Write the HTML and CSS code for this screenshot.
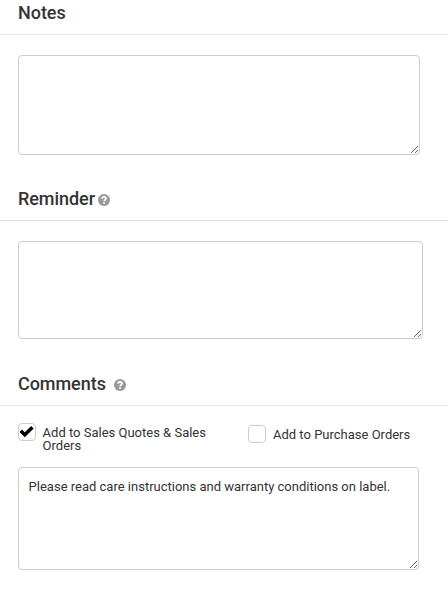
FILE: index.html
```html
<!DOCTYPE html>
<html lang="en">
<head>
    <meta charset="UTF-8">
    <meta name="viewport" content="width=device-width, initial-scale=1.0">
    <title>Notes</title>
    <link rel="stylesheet" href="styles.css">
</head>
<body>

<section class="panel">
    <h2 class="panel-title notes-title">Notes</h2>
    <textarea class="field notes-field" aria-label="Notes"></textarea>
</section>

<section class="panel">
    <h2 class="panel-title reminder-title">Reminder
        <svg class="help" viewBox="0 0 12 12"><circle cx="6" cy="6" r="6"/><path d="M4 4.6C4.1 3.4 4.9 2.8 6 2.8c1.2 0 2 .7 2 1.7 0 1.4-1.9 1.4-1.9 2.7M6.1 8.2v1.6"/></svg>
    </h2>
    <textarea class="field reminder-field" aria-label="Reminder"></textarea>
</section>

<section class="panel">
    <h2 class="panel-title comments-title">Comments
        <svg class="help" viewBox="0 0 12 12"><circle cx="6" cy="6" r="6"/><path d="M4 4.6C4.1 3.4 4.9 2.8 6 2.8c1.2 0 2 .7 2 1.7 0 1.4-1.9 1.4-1.9 2.7M6.1 8.2v1.6"/></svg>
    </h2>
    <div class="options">
        <label class="option option-sales">
            <span class="box">
                <svg class="tick" viewBox="0 0 18 18"><path d="M2.7 7.7 6.8 11.7 14.4 4.3"/></svg>
            </span>
            <span class="option-text">Add to Sales Quotes &amp; Sales Orders</span>
        </label>
        <label class="option option-purchase">
            <span class="box"></span>
            <span class="option-text">Add to Purchase Orders</span>
        </label>
    </div>
    <textarea class="field comments-field" aria-label="Comments">Please read care instructions and warranty conditions on label.</textarea>
</section>

</body>
</html>
```
FILE: styles.css
```css
* {
    box-sizing: border-box;
}

body {
    margin: 0;
    font-family: Roboto, Arial, sans-serif;
    font-size: 13px;
    color: #333;
    background: #fff;
}

.panel-title {
    display: flex;
    align-items: center;
    margin: 0;
    padding: 0 18px;
    font-size: 18px;
    font-weight: 500;
    line-height: 24px;
    letter-spacing: -0.05px;
    border-bottom: 1px solid #e1e6e6;
}

.notes-title {
    height: 35px;
    padding-bottom: 9px;
}

.reminder-title {
    height: 66px;
    padding-top: 22px;
    gap: 3px;
}

.comments-title {
    height: 67px;
    padding-top: 23px;
    gap: 8px;
}

.help {
    width: 12px;
    height: 12px;
    margin-top: 3px;
}

.help circle {
    fill: #999;
}

.help path {
    fill: none;
    stroke: #fff;
    stroke-width: 1.8;
}

.field {
    display: block;
    margin: 20px 0 0 18px;
    padding: 11px 10px 11px 9.6px;
    font: 13px/16px Roboto, Arial, sans-serif;
    color: #333;
    background: #fff;
    border: 1px solid #ccc;
    border-radius: 4px;
    outline: none;
}

.notes-field {
    width: 402px;
    height: 100px;
}

.reminder-field {
    width: 405px;
    height: 98px;
}

.comments-field {
    width: 401px;
    height: 103px;
    margin-top: 14px;
}

.options {
    display: flex;
    height: 47px;
    padding: 17px 18px 0;
}

.option {
    display: flex;
    align-items: flex-start;
    gap: 7px;
}

.option-sales {
    width: 230px;
    gap: 6.6px;
}

.option-sales .option-text {
    width: 175px;
}

.option-purchase {
    padding-top: 2px;
}

.option-text {
    padding-top: 3px;
    line-height: 13px;
}

.box {
    flex: none;
    width: 18px;
    height: 18px;
    border: 1px solid #ccc;
    border-radius: 4px;
}

.tick {
    display: block;
    width: 18px;
    height: 18px;
    margin: -1px;
}

.tick path {
    fill: none;
    stroke: #000;
    stroke-width: 3.5;
}
```
